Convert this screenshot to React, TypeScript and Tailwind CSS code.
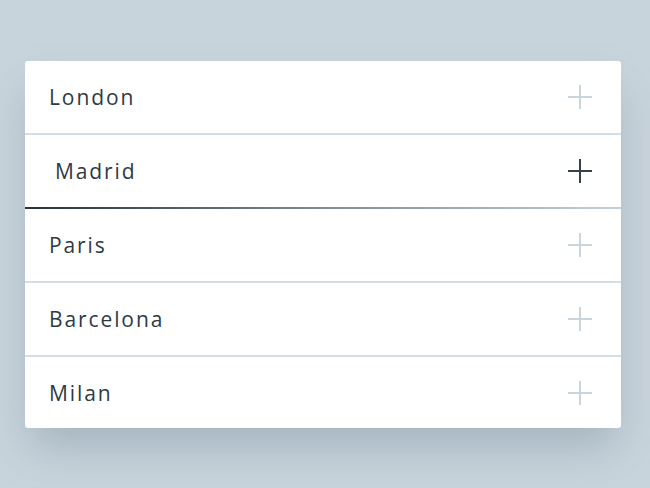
import { useState } from "react";

const cities = ["London", "Madrid", "Paris", "Barcelona", "Milan"];

function PlusIcon({ active }: { active: boolean }) {
    return (
        <svg width="26" height="26" viewBox="0 0 26 26" fill="none">
            <path
                d="M13 1v24M1 13h24"
                stroke={active ? "#34404a" : "#cad6de"}
                strokeWidth="2"
            />
        </svg>
    );
}

export default function App() {
    const [hovered, setHovered] = useState(1);

    return (
        <main
            className="w-[650px] h-[488px] overflow-hidden bg-[#c8d4dc] pt-[61px] pl-[25px]"
            style={{ fontFamily: '"Open Sans", "Noto Sans", sans-serif' }}
        >
            <ul className="w-[596px] bg-white rounded-[3px] shadow-[0_24px_40px_-6px_rgba(110,130,145,0.4)]">
                {cities.map((city, i) => {
                    const active = i === hovered;
                    const last = i === cities.length - 1;
                    return (
                        <li
                            key={city}
                            onMouseEnter={() => setHovered(i)}
                            className={`relative flex items-center justify-between pl-6 pr-[28px] cursor-pointer ${
                                last ? "h-[71px]" : "h-[72px] mb-[2px]"
                            }`}
                        >
                            <span
                                className={`text-[21px] tracking-[1.9px] text-[#2e3a44] translate-y-[1px] ${
                                    active ? "translate-x-[6px]" : ""
                                }`}
                            >
                                {city}
                            </span>
                            <PlusIcon active={active} />
                            {!last && (
                                <span
                                    className={`absolute left-0 right-0 -bottom-[2px] h-[2px] ${
                                        active
                                            ? "bg-gradient-to-r from-[#26323c] via-[#7f8d97] to-[#c5d1d9]"
                                            : "bg-[#d3dee5]"
                                    }`}
                                />
                            )}
                        </li>
                    );
                })}
            </ul>
        </main>
    );
}
